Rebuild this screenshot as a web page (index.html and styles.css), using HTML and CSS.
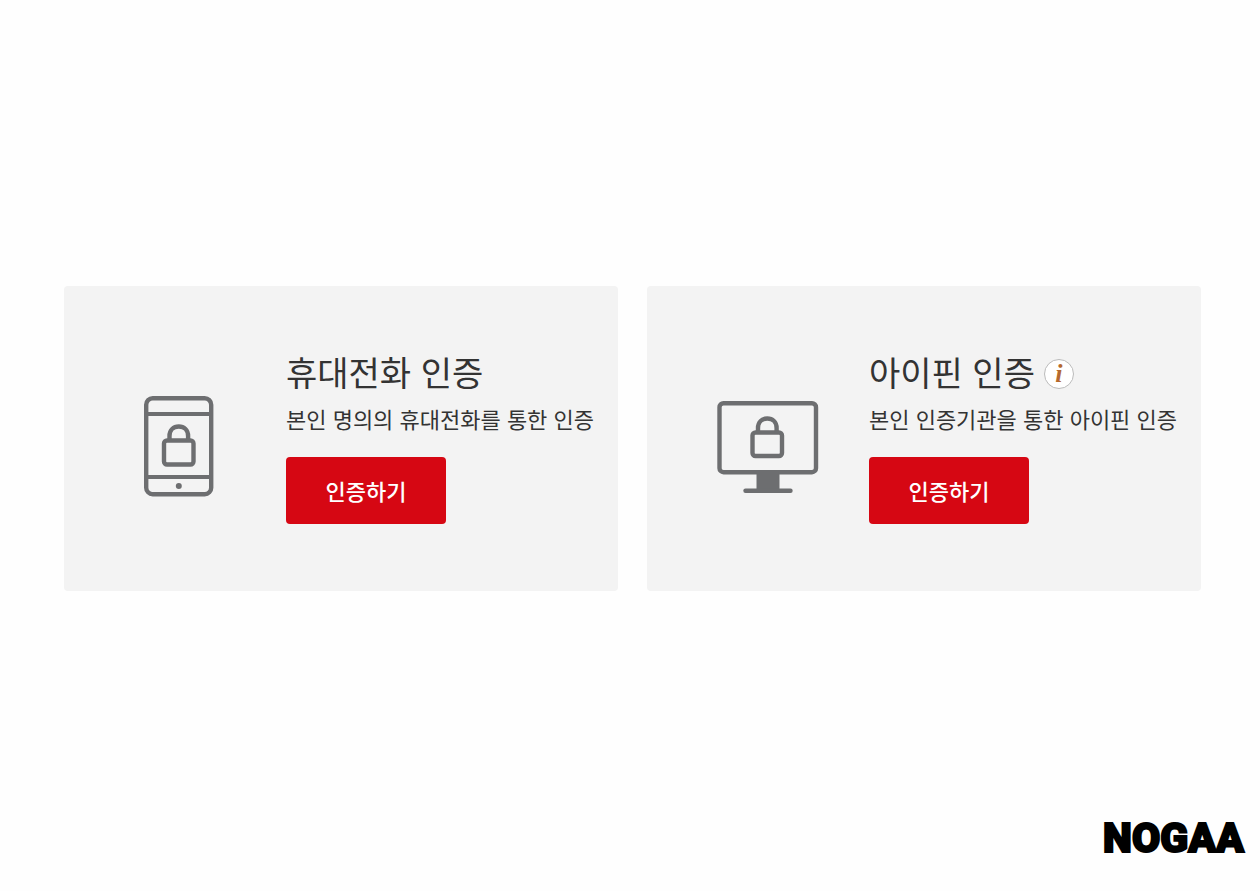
FILE: index.html
```
<!DOCTYPE html>
<html lang="ko">
<head>
    <meta charset="UTF-8">
    <meta name="viewport" content="width=device-width, initial-scale=1.0">
    <title>본인 인증</title>
    <link rel="stylesheet" href="styles.css">
</head>
<body>
    <main class="auth-list">
        <section class="auth-card">
            <svg class="auth-icon" viewBox="0 0 108 104" fill="none" stroke="#6d6e70" stroke-width="4.4" aria-hidden="true">
                <rect x="14.2" y="4.2" width="65" height="96" rx="6.5"/>
                <path d="M14 20h65M14 83h65" stroke-width="3.8"/>
                <rect x="32" y="46.5" width="29.5" height="24" rx="3"/>
                <path d="M37.500 46v-4c0-6 4-9.500 9.300-9.500s9.300 3.500 9.300 9.500v4"/>
                <circle cx="46.8" cy="92" r="3" fill="#6d6e70" stroke="none"/>
            </svg>
            <div class="auth-body">
                <h2 class="auth-title">휴대전화 인증</h2>
                <p class="auth-desc">본인 명의의 휴대전화를 통한 인증</p>
                <button type="button" class="auth-button">인증하기</button>
            </div>
        </section>

        <section class="auth-card">
            <svg class="auth-icon" viewBox="0 0 108 104" fill="none" stroke="#6d6e70" stroke-width="4.4" aria-hidden="true">
                <rect x="4.5" y="9.2" width="96.5" height="69" rx="4"/>
                <rect x="37.5" y="38.5" width="29.5" height="23.5" rx="3"/>
                <path d="M43 38v-4c0-6 4-9.500 9.300-9.500s9.300 3.500 9.300 9.500v4"/>
                <path d="M41.500 79h23v16h-23z" fill="#6d6e70" stroke="none"/>
                <path d="M30.500 96.800h45" stroke-linecap="round"/>
            </svg>
            <div class="auth-body">
                <h2 class="auth-title">아이핀 인증 <button type="button" class="info-button" aria-label="아이핀 안내">i</button></h2>
                <p class="auth-desc">본인 인증기관을 통한 아이핀 인증</p>
                <button type="button" class="auth-button">인증하기</button>
            </div>
        </section>
    </main>

    <footer class="footer">
        <span class="logo">NOGAA</span>
    </footer>
</body>
</html>
```
FILE: styles.css
```
* {
    box-sizing: border-box;
}

body {
    display: flex;
    flex-direction: column;
    min-height: 100vh;
    margin: 0;
    background: #fefefe;
    color: #333;
    font-family: "Noto Sans CJK KR", sans-serif;
}

.auth-list {
    display: grid;
    grid-template-columns: 1fr 1fr;
    gap: 29px;
    flex: 1;
    align-items: start;
    padding: 286px 59px 40px 64px;
}

.auth-card {
    display: flex;
    align-items: flex-start;
    gap: 46px;
    padding: 62px 0 67px 68px;
    background: #f3f3f3;
    border-radius: 4px;
}

.auth-icon {
    flex: none;
    width: 108px;
    height: 104px;
    margin-top: 46px;
}

.auth-title {
    display: flex;
    align-items: center;
    gap: 9px;
    margin: 0;
    font-size: 34px;
    font-weight: 400;
    line-height: 48px;
}

.auth-desc {
    margin: 6px 0 23px;
    font-size: 22px;
    line-height: 32px;
    white-space: nowrap;
}

.auth-button {
    display: block;
    width: 160px;
    height: 67px;
    padding: 0 0 2px;
    border: none;
    border-radius: 4px;
    background: #d60713;
    color: #fff;
    font-family: inherit;
    font-size: 22px;
    font-weight: 500;
    cursor: pointer;
}

.info-button {
    width: 30px;
    height: 30px;
    margin-top: 4px;
    padding: 0;
    border: 1px solid #bbb;
    border-radius: 50%;
    background: #fff;
    color: #b5692f;
    font-family: "Liberation Serif", serif;
    font-size: 26px;
    font-style: italic;
    font-weight: 700;
    line-height: 26px;
    cursor: pointer;
}

.footer {
    padding: 0 16px 29px;
    text-align: right;
}

.logo {
    display: block;
    color: #000;
    font-family: Roboto, sans-serif;
    font-size: 41px;
    font-weight: 900;
    line-height: 48px;
    -webkit-text-stroke: 2px #000;
}
```
